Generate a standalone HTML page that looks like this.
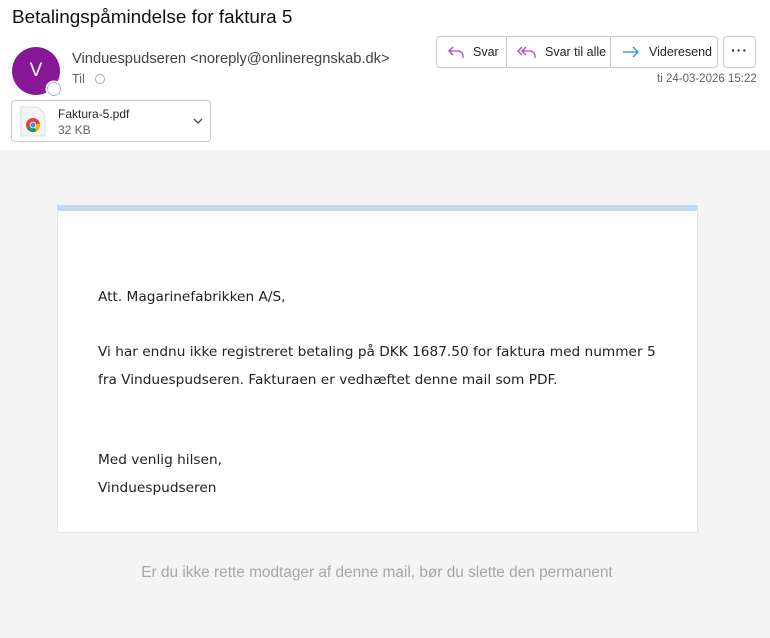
<!DOCTYPE html>
<html><head><meta charset="utf-8"><style>
*{margin:0;padding:0;box-sizing:border-box}
body{width:770px;height:638px;background:#fff;font-family:"Liberation Sans",sans-serif;position:relative;overflow:hidden;color:#242424}
.abs{position:absolute}
.title{left:12px;top:7px;font-size:18.9px;color:#111}
.av{left:12px;top:47px;width:48px;height:48px;border-radius:50%;background:#881798;color:#fff;font-size:19px;text-align:center;line-height:48px}
.st{left:47px;top:82px;width:14px;height:14px;border-radius:50%;background:#fff;border:1.5px solid #a9bcc9;box-shadow:0 0 0 1.5px #fff}
.from{left:72px;top:51px;font-size:14.7px;color:#424242}
.til{left:72px;top:72px;font-size:12.5px;color:#616161}
.tc{left:95px;top:74px;width:10px;height:10px;border-radius:50%;border:1px solid #9ab0c0}
.att{left:11px;top:100px;width:200px;height:42px;border:1px solid #c8c8c8;border-radius:4px}
.att .n{position:absolute;left:46px;top:6px;font-size:12px;color:#242424}
.att .s{position:absolute;left:46px;top:22px;font-size:12px;color:#616161}
.btns{left:436px;top:36px;width:282px;height:32px;border:1px solid #c8c8c8;border-radius:4px;display:flex;font-size:12.5px;color:#242424}
.btns div{display:flex;align-items:center;border-right:1px solid #c8c8c8;padding-left:10px}
.more{left:723px;top:36px;width:33px;height:32px;border:1px solid #c8c8c8;border-radius:4px;text-align:center;font-size:14px;line-height:26px;font-weight:bold;letter-spacing:1px}
.date{left:657px;top:73px;font-size:11.5px;color:#616161}
.gray{left:0;top:150px;width:770px;height:488px;background:#f4f4f4}
.card{left:57px;top:205px;width:641px;height:328px;background:#fff;border:1px solid #e6e6e6;border-top:6px solid #c4d8f3}
.card p{position:absolute;left:40px;font-family:"DejaVu Sans",sans-serif;font-size:13.7px;color:#222;line-height:28px}
.foot{left:-8px;width:770px;top:564px;text-align:center;font-size:15.4px;color:#a6a6a6}
</style></head><body>
<div class="abs title">Betalingspåmindelse for faktura 5</div>
<div class="abs av">V</div><div class="abs st"></div>
<div class="abs from">Vinduespudseren &lt;noreply@onlineregnskab.dk&gt;</div>
<div class="abs til">Til</div><div class="abs tc"></div>
<div class="abs att">
<svg style="position:absolute;left:8px;top:5px" width="26" height="31" viewBox="0 0 26 31"><path d="M1 1h17l7 7v22H1z" fill="#f4f4f4" stroke="#ddd"/><circle cx="13" cy="19" r="7" fill="#db4437"/><path d="M13 19 L7 22.5 A7 7 0 0 0 16.5 25 Z" fill="#0f9d58"/><path d="M13 19 L16.5 25 A7 7 0 0 0 19.9 17.5 Z" fill="#f4b400"/><circle cx="13" cy="19" r="3.3" fill="#fff"/><circle cx="13" cy="19" r="2.5" fill="#4285f4"/></svg>
<div class="n">Faktura-5.pdf</div><div class="s">32 KB</div>
<svg style="position:absolute;left:180px;top:16px" width="12" height="8" viewBox="0 0 12 8"><path d="M2 2l4 4 4-4" fill="none" stroke="#444" stroke-width="1.3"/></svg>
</div>
<div class="abs btns">
<div style="width:70px"><svg width="20" height="16" viewBox="0 0 20 16"><path d="M6 3L2 7l4 4M2 7h9a5 5 0 0 1 5 5v2" fill="none" stroke="#b146c2" stroke-width="1.3"/></svg><span style="margin-left:6px">Svar</span></div>
<div style="width:104px"><svg width="22" height="16" viewBox="0 0 22 16"><path d="M5 3L1 7l4 4M9 3L5 7l4 4M5 7h8a5 5 0 0 1 5 5v2" fill="none" stroke="#b146c2" stroke-width="1.3"/></svg><span style="margin-left:6px">Svar til alle</span></div>
<div style="width:106px;border-right:none"><svg width="20" height="16" viewBox="0 0 20 16"><path d="M2 8h15M12 3l5 5-5 5" fill="none" stroke="#2b88d8" stroke-width="1.3"/></svg><span style="margin-left:8px">Videresend</span></div>
</div>
<div class="abs more">···</div>
<div class="abs date">ti 24-03-2026 15:22</div>
<div class="abs gray"></div>
<div class="abs card">
<p style="top:72px">Att. Magarinefabrikken A/S,</p>
<p style="top:127px">Vi har endnu ikke registreret betaling på DKK 1687.50 for faktura med nummer 5<br>fra Vinduespudseren. Fakturaen er vedhæftet denne mail som PDF.</p>
<p style="top:235px">Med venlig hilsen,<br>Vinduespudseren</p>
</div>
<div class="abs foot">Er du ikke rette modtager af denne mail, bør du slette den permanent</div>
</body></html>
